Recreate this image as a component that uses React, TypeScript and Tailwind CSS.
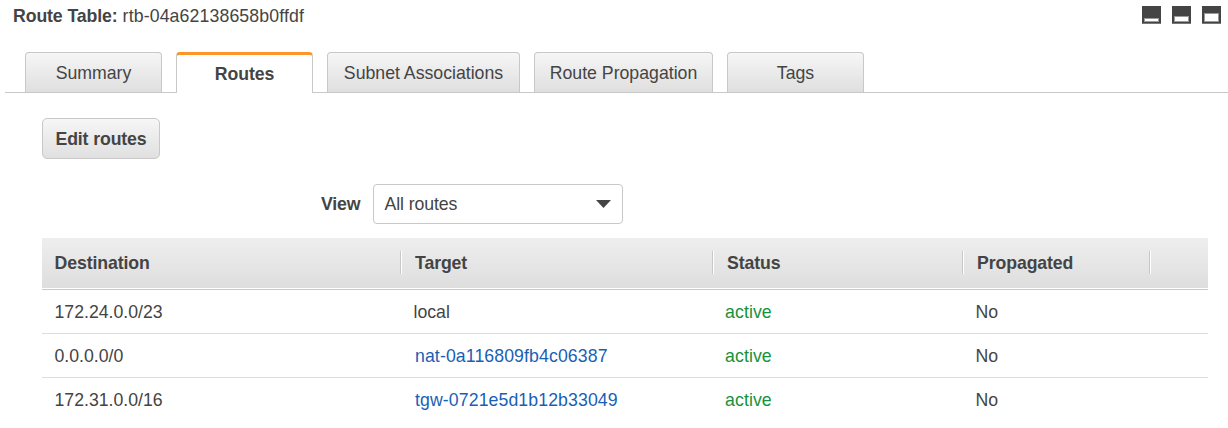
type RouteEntry = {
  destination: string;
  target: string;
  isLink: boolean;
  status: string;
  propagated: string;
};

const TABS = [
  { label: 'Summary', width: 'w-[137px]', active: false },
  { label: 'Routes', width: 'w-[137px]', active: true },
  { label: 'Subnet Associations', width: 'w-[193px]', active: false },
  { label: 'Route Propagation', width: 'w-[179px]', active: false },
  { label: 'Tags', width: 'w-[137px]', active: false },
];

const ROUTES: RouteEntry[] = [
  { destination: '172.24.0.0/23', target: 'local', isLink: false, status: 'active', propagated: 'No' },
  { destination: '0.0.0.0/0', target: 'nat-0a116809fb4c06387', isLink: true, status: 'active', propagated: 'No' },
  { destination: '172.31.0.0/16', target: 'tgw-0721e5d1b12b33049', isLink: true, status: 'active', propagated: 'No' },
];

const COLUMNS = 'grid grid-cols-[358px_312px_250px_187px_59px]';

const PaneIcon = ({ top, height }: { top: number; height: number }) => (
  <svg width="19" height="18" viewBox="0 0 19 18" shapeRendering="crispEdges">
    <rect width="19" height="18" fill="#444" />
    <rect y="17" width="19" height="1" fill="#777" />
    <rect x="2" y={top - 1} width="15" height={height + 2} fill="#999" />
    <rect x="3" y={top} width="13" height={height} fill="#fff" />
  </svg>
);

const Tab = ({ label, width, active }: { label: string; width: string; active: boolean }) => (
  <button
    className={`${width} rounded-t-[4px] border-[#c8c8c8] text-center ${
      active
        ? 'h-[41px] border-x border-t-[3px] border-t-[#ff9429] bg-white pb-px font-bold tracking-[-0.1px]'
        : 'h-10 border border-b-0 bg-linear-to-b from-[#f6f6f6] to-[#dfdfdf]'
    }`}
  >
    {label}
  </button>
);

const HeaderCell = ({ label }: { label: string }) => (
  <div className="h-[23px] border-l border-[#c8c8c8] pt-px pl-[14px] shadow-[inset_1px_0_0_#fff]">
    {label}
  </div>
);

const App = () => {
  return (
    <div className="h-[428px] w-[1228px] overflow-hidden bg-white font-['Liberation_Sans',Arial,sans-serif] text-[17.7px] leading-[22px] text-[#444]">
      <header className="flex h-[52px] items-start justify-between pr-[7px] pl-[13px]">
        <h1 className="flex gap-[5px] pt-[5px]">
          <span className="font-bold tracking-[-0.1px]">Route Table:</span>
          <span className="tracking-[0.13px]">rtb-04a62138658b0ffdf</span>
        </h1>
        <div className="flex gap-[11px] pt-[6px]">
          <PaneIcon top={13} height={2} />
          <PaneIcon top={11} height={4} />
          <PaneIcon top={8} height={7} />
        </div>
      </header>

      <nav className="ml-[5px] flex h-[41px] items-start gap-[14px] pl-5 shadow-[inset_0_-1px_0_#c8c8c8]">
        {TABS.map((tab) => (
          <Tab key={tab.label} {...tab} />
        ))}
      </nav>

      <main className="pt-[25px] pr-5 pl-[42px]">
        <button className="block h-[41px] w-[118px] rounded-[5px] border border-[#c8c8c8] bg-linear-to-b from-[#f6f6f6] to-[#e0e0e0] font-bold tracking-[-0.12px]">
          Edit routes
        </button>

        <div className="mt-[25px] flex items-center pl-[279px]">
          <label className="w-[52px] font-bold tracking-[-0.15px]">View</label>
          <div className="flex h-10 w-[250px] items-center justify-between rounded-[4px] border border-[#c8c8c8] pr-[11px] pl-[10.5px] tracking-[-0.1px]">
            All routes
            <svg width="15" height="8" viewBox="0 0 15 8">
              <path d="M0 0h15L7.5 8z" fill="#444" />
            </svg>
          </div>
        </div>

        <section className="mt-[14px]">
          <div
            className={`${COLUMNS} h-[50px] items-start bg-linear-to-b from-[#eee] to-[#dedede] pt-[13px] font-bold tracking-[-0.1px]`}
          >
            <div className="pt-px pl-[12.5px]">Destination</div>
            <HeaderCell label="Target" />
            <HeaderCell label="Status" />
            <HeaderCell label="Propagated" />
            <HeaderCell label="" />
          </div>
          <div className="mt-px h-px bg-[#c8c8c8]" />
          {ROUTES.map((route) => (
            <div
              key={route.destination}
              className={`${COLUMNS} h-11 items-center border-b border-[#ddd] last:border-b-0`}
            >
              <div className="pl-[12.5px]">{route.destination}</div>
              {route.isLink ? (
                <a className="pl-[15px] tracking-[0.1px] text-[#1a5fb4]">{route.target}</a>
              ) : (
                <div className="pl-[13.5px]">{route.target}</div>
              )}
              <div className="pl-[13px] tracking-[0.1px] text-[#16923c]">{route.status}</div>
              <div className="pl-[13.5px]">{route.propagated}</div>
            </div>
          ))}
        </section>
      </main>
    </div>
  );
};

export default App;
